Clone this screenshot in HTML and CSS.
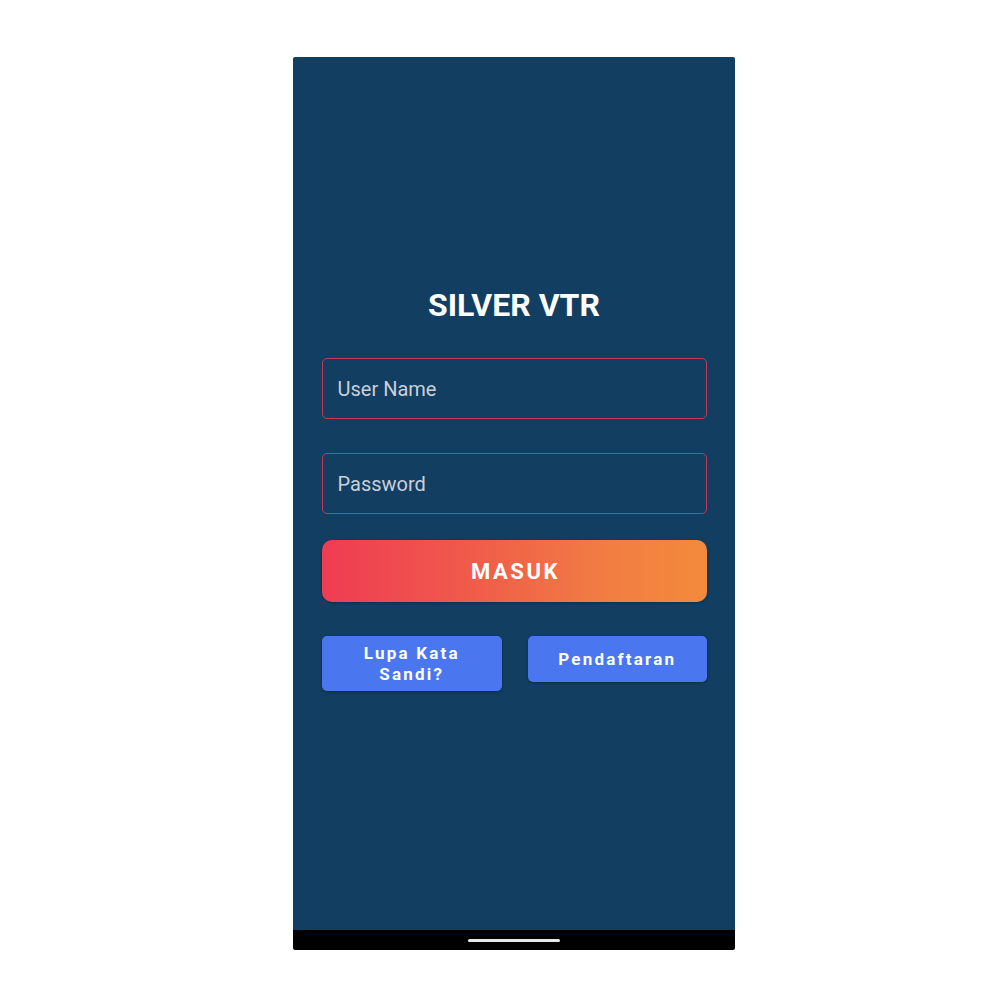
FILE: index.html
```html
<!DOCTYPE html>
<html lang="id">
<head>
<meta charset="utf-8">
<title>SILVER VTR</title>
<link rel="stylesheet" href="styles.css">
</head>
<body>
<div class="phone">
  <main class="screen">
    <h1 class="title">SILVER VTR</h1>
    <div class="field"><span class="placeholder">User Name</span></div>
    <div class="field field-second"><span class="placeholder">Password</span></div>
    <button class="masuk">MASUK</button>
    <div class="links">
      <button class="link-btn tall">Lupa Kata<br>Sandi?</button>
      <button class="link-btn">Pendaftaran</button>
    </div>
  </main>
  <div class="navbar"><span class="home"></span></div>
</div>
</body>
</html>
```
FILE: styles.css
```css
html, body {
  margin: 0;
  padding: 0;
  background: #ffffff;
}
body {
  padding: 57px 0 0 293px;
  font-family: Roboto, "Noto Sans", sans-serif;
}
.phone {
  width: 442px;
  height: 893px;
  display: flex;
  flex-direction: column;
  border-radius: 2px;
  overflow: hidden;
}
.screen {
  flex: 1;
  background: #123e61;
  padding: 230px 28px 0 29px;
  display: flex;
  flex-direction: column;
}
.title {
  margin: 0;
  text-align: center;
  color: #ffffff;
  font-size: 32px;
  line-height: 36px;
  font-weight: 700;
  padding-right: 1px;
}
.field {
  margin-top: 35px;
  height: 61px;
  box-sizing: border-box;
  border: 1.5px solid #c03a5c;
  border-radius: 5px;
  display: flex;
  align-items: center;
  padding-left: 14.5px;
}
.field-second {
  margin-top: 34px;
  height: 61px;
}
.placeholder {
  color: #c9d0d9;
  font-size: 20px;
}
.masuk {
  margin-top: 26px;
  height: 62px;
  border: none;
  border-radius: 10px;
  background: linear-gradient(90deg, #ef3c53 0%, #f05c4a 40%, #f27e42 75%, #f38a3c 100%);
  color: #ffffff;
  font-family: Roboto, sans-serif;
  font-weight: 700;
  font-size: 22px;
  letter-spacing: 2.5px;
  padding: 0 0 0 2px;
  box-shadow: 0 1px 3px rgba(0,0,0,0.25);
}
.links {
  margin-top: 34px;
  display: flex;
  gap: 26px;
  align-items: flex-start;
}
.link-btn {
  flex: 1;
  height: 46px;
  border: none;
  border-radius: 5px;
  background: #4a77f0;
  color: #ffffff;
  font-family: Roboto, sans-serif;
  font-weight: 700;
  font-size: 17px;
  letter-spacing: 2.2px;
  line-height: 21px;
  padding: 0;
  box-shadow: 0 1px 3px rgba(0,0,0,0.3);
}
.link-btn.tall {
  height: 55px;
}
.navbar {
  height: 20px;
  background: #000000;
  display: flex;
  justify-content: center;
  align-items: center;
}
.home {
  width: 92px;
  height: 3px;
  border-radius: 2px;
  background: #e8e8e8;
}
```
